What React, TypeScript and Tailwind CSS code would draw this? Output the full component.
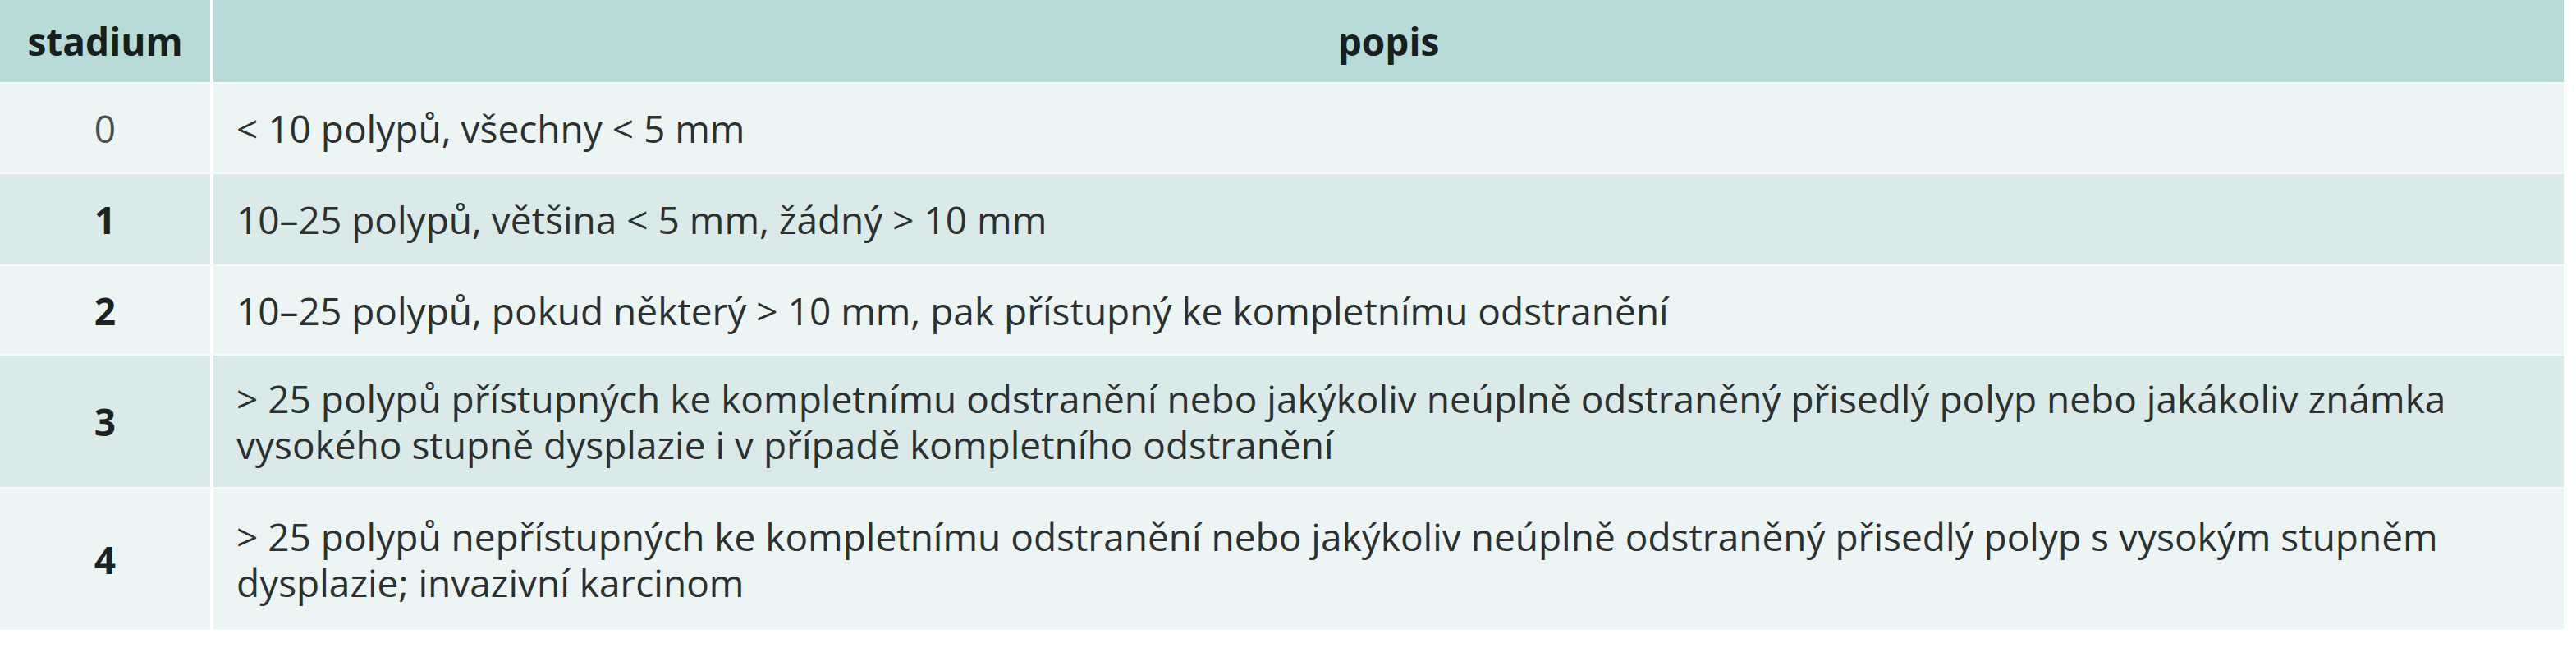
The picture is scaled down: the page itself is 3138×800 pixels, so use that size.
const rows = [
  { stage: '0', text: '< 10 polypů, všechny < 5 mm', dark: false, h: 'h-[110px]' },
  { stage: '1', text: '10–25 polypů, většina < 5 mm, žádný > 10 mm', dark: true, h: 'h-[112px]' },
  {
    stage: '2',
    text: '10–25 polypů, pokud některý > 10 mm, pak přístupný ke kompletnímu odstranění',
    dark: false,
    h: 'h-[109px]',
  },
  {
    stage: '3',
    text: '> 25 polypů přístupných ke kompletnímu odstranění nebo jakýkoliv neúplně odstraněný přisedlý polyp nebo jakákoliv známka vysokého stupně dysplazie i v případě kompletního odstranění',
    dark: true,
    h: 'h-[162px]',
  },
  {
    stage: '4',
    text: '> 25 polypů nepřístupných ke kompletnímu odstranění nebo jakýkoliv neúplně odstraněný přisedlý polyp s vysokým stupněm dysplazie; invazivní karcinom',
    dark: false,
    h: 'h-[174px]',
  },
]

export default function App() {
  return (
    <div className="w-[3138px] h-[800px] bg-white font-['Open_Sans',Arial,sans-serif] text-[46px] leading-[56px] text-[#2b3030]">
      <div className="w-[3123px]">
        {/* header */}
        <div className="flex h-[100px] bg-[#b8dbd8] font-bold text-[#172020]">
          <div className="w-[260px] flex items-center justify-center border-r-4 border-white">stadium</div>
          <div className="flex-1 flex items-center justify-center">popis</div>
        </div>

        {rows.map((row) => (
          <div
            key={row.stage}
            className={`flex border-t-2 border-[#f4faf9] ${row.h} ${row.dark ? 'bg-[#d9eae8]' : 'bg-[#ecf5f4]'}`}
          >
            <div
              className={`w-[260px] flex items-center justify-center border-r-4 border-white ${
                row.stage === '0' ? 'font-normal text-[#4a5050]' : 'font-bold text-[#1c2222]'
              }`}
            >
              {row.stage}
            </div>
            <div className="flex-1 flex items-center pl-[28px] pr-[36px]">{row.text}</div>
          </div>
        ))}
      </div>
    </div>
  )
}
